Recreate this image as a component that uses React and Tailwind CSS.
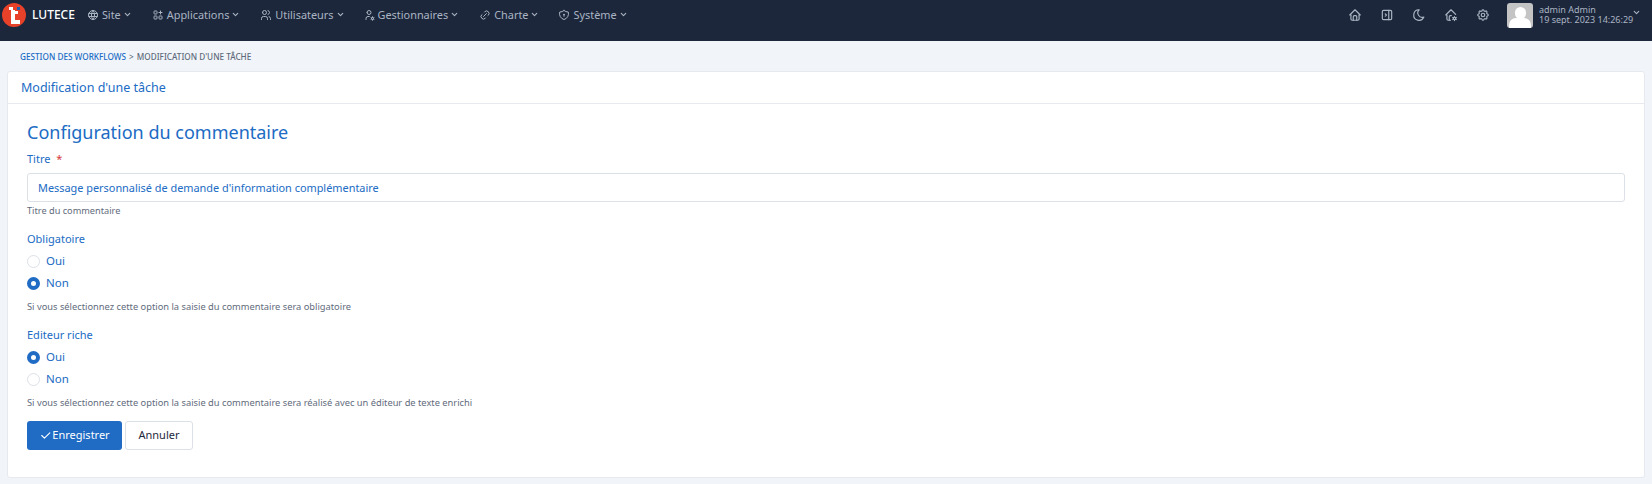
import { TbWorld, TbApps, TbUsers, TbUserCog, TbLink, TbShieldLock, TbHome, TbLayoutSidebarRightCollapse, TbMoon, TbHomeCog, TbSettings, TbChevronDown, TbCheck } from 'react-icons/tb';

const menu = [
  { label: 'Site', icon: TbWorld, className: 'ml-[12px]' },
  { label: 'Applications', icon: TbApps, className: 'ml-[20px]' },
  { label: 'Utilisateurs', icon: TbUsers, className: 'ml-[20px]' },
  { label: 'Gestionnaires', icon: TbUserCog, className: 'ml-[18px]' },
  { label: 'Charte', icon: TbLink, className: 'ml-[20px]' },
  { label: 'Système', icon: TbShieldLock, className: 'ml-[19px]' },
];

const tools = [TbHome, TbLayoutSidebarRightCollapse, TbMoon, TbHomeCog, TbSettings];

function Radio({ checked, label }) {
  return (
    <label className="flex items-center gap-[6px] h-[22px] text-[11.5px] text-[#206bc4]">
      {checked ? (
        <span className="w-[13px] h-[13px] rounded-full border-[4px] border-[#206bc4] bg-white" />
      ) : (
        <span className="w-[13px] h-[13px] rounded-full border border-[#dce1e7] bg-white" />
      )}
      {label}
    </label>
  );
}

function RadioGroup({ title, value, help }) {
  return (
    <div className="mb-[10px]">
      <div className="text-[11px] leading-[20px] text-[#206bc4] mb-[1px]">{title}</div>
      <Radio label="Oui" checked={value === 'oui'} />
      <Radio label="Non" checked={value === 'non'} />
      <div className="text-[9.3px] leading-[16px] text-[#5f6b7c] mt-[5px]">{help}</div>
    </div>
  );
}

export default function App() {
  return (
    <div className="min-h-[484px] bg-[#f1f5f9] font-['Noto_Sans','Open_Sans',sans-serif]">
      <header className="h-[41px] bg-[#1c273c] flex items-center pl-[1px] pr-[11px] pb-[11px] text-[#aab4c2]">
        <svg width="26" height="26" viewBox="0 0 26 26" className="shrink-0">
          <circle cx="13" cy="13" r="12" fill="#e8412a" />
          <path d="M10 8h4v10h5v4h-9z" fill="#fff" />
          <rect x="8" y="5" width="4" height="3" fill="#fff" />
          <rect x="14" y="9" width="3" height="3" fill="#fff" />
          <rect x="16" y="5" width="3" height="3" fill="#1c5fb0" />
        </svg>
        <span className="ml-[5px] text-[12px] font-medium text-white">LUTECE</span>
        <nav className="flex items-center">
          {menu.map(({ label, icon: Icon, className }) => (
            <div key={label} className={`flex items-center text-[10.9px] ${className}`}>
              <Icon size={12} className="mr-[3px]" />
              {label}
              <TbChevronDown size={9} strokeWidth={3} className="ml-[2px]" />
            </div>
          ))}
        </nav>
        <div className="ml-auto flex items-center">
          <div className="flex items-center gap-[18px]">
            {tools.map((Icon, i) => (
              <Icon key={i} size={14} />
            ))}
          </div>
          <div className="w-[26px] h-[25px] rounded-[3px] bg-[#c4c4c4] ml-[17px] overflow-hidden flex flex-col items-center justify-end">
            <span className="w-[11px] h-[12px] rounded-full bg-white mb-[-1px]" />
            <span className="w-[22px] h-[10px] rounded-t-[7px] bg-white" />
          </div>
          <div className="ml-[6px] w-[93px] whitespace-nowrap text-[9px] leading-[10px] text-[#aab4c2]">
            <div>admin Admin</div>
            <div>19 sept. 2023 14:26:29</div>
          </div>
          <TbChevronDown size={9} strokeWidth={3} className="mb-[6px]" />
        </div>
      </header>

      <div className="h-[30px] pl-[20px] pt-[2px] flex items-center text-[8.2px] font-medium uppercase text-[#5f6b7c]">
        <span className="text-[#206bc4]">Gestion des workflows</span>
        <span className="mx-[3px]">&gt;</span>
        <span>Modification d'une tâche</span>
      </div>

      <main className="mx-[7px] bg-white border border-[#e6e9ee] rounded-[3px] h-[407px]">
        <div className="h-[32px] pl-[13px] pt-[1px] flex items-center border-b border-[#e6e9ee] text-[12.5px] text-[#206bc4]">
          Modification d'une tâche
        </div>
        <div className="px-[19px] pt-[16px]">
          <h2 className="text-[18px] leading-[24px] text-[#206bc4] mb-[6px]">Configuration du commentaire</h2>
          <div className="text-[11px] leading-[18px] text-[#206bc4] mb-[5px]">
            Titre <span className="ml-[3px] text-[#d63939]">*</span>
          </div>
          <input
            readOnly
            value="Message personnalisé de demande d'information complémentaire"
            className="block w-full h-[29px] px-[10px] text-[10.9px] text-[#206bc4] bg-white border border-[#dce1e7] rounded-[3px] outline-none"
          />
          <div className="text-[9.2px] leading-[16px] text-[#5f6b7c] mt-[1px] mb-[10px]">Titre du commentaire</div>
          <RadioGroup
            title="Obligatoire"
            value="non"
            help="Si vous sélectionnez cette option la saisie du commentaire sera obligatoire"
          />
          <RadioGroup
            title="Editeur riche"
            value="oui"
            help="Si vous sélectionnez cette option la saisie du commentaire sera réalisé avec un éditeur de texte enrichi"
          />
          <div className="flex gap-[3px] mt-[3px]">
            <button className="w-[95px] h-[29px] flex items-center justify-center bg-[#206bc4] text-white text-[11px] rounded-[3px]">
              <TbCheck size={13} />
              Enregistrer
            </button>
            <button className="w-[68px] h-[29px] flex items-center justify-center bg-white border border-[#dce1e7] text-[#1e293b] text-[11px] rounded-[3px]">
              Annuler
            </button>
          </div>
        </div>
      </main>
    </div>
  );
}
